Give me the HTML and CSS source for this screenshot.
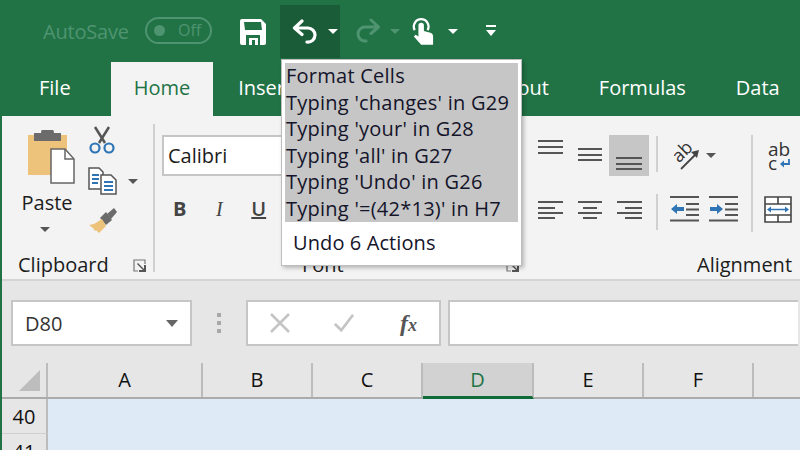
FILE: index.html
```html
<!DOCTYPE html>
<html lang="en">

<head>
    <meta charset="UTF-8">
    <meta name="viewport" content="width=device-width, initial-scale=1.0">
    <title>Excel Undo</title>
    <link rel="stylesheet" href="styles.css">
</head>

<body>

    <!-- Quick access bar -->
    <header class="titlebar">
        <span class="autosave">AutoSave</span>
        <span class="toggle"><span class="toggle-dot"></span><span class="toggle-label">Off</span></span>
        <svg class="qa-save" viewBox="0 0 26 26">
            <path fill="#fff" d="M2 0h19l5 5v19a2 2 0 0 1-2 2H2a2 2 0 0 1-2-2V2a2 2 0 0 1 2-2z" />
            <path fill="#217346" d="M4 3h17l1 8H5zM6 16h14v10H6z" />
            <path fill="#fff" d="M9 19h9v7H9z" />
            <path fill="#217346" d="M12 21h3v5h-3z" />
        </svg>
        <div class="qa-undo">
            <svg class="qa-arrow" viewBox="0 0 26 26">
                <path fill="none" stroke="#fff" stroke-width="3.2" stroke-linecap="round" stroke-linejoin="round"
                    d="M10 2 2.5 9 10 15.500M3 9h13a7 7 0 0 1 7 7 7 7 0 0 1-8 7" />
            </svg>
            <span class="caret caret-white"></span>
        </div>
        <svg class="qa-arrow qa-redo" viewBox="0 0 26 26">
            <path fill="none" stroke="#4f9470" stroke-width="3" stroke-linecap="round" stroke-linejoin="round"
                d="M16 2l7.500 7L16 15.500M23 9H10a7 7 0 0 0-7 7 7 7 0 0 0 8 7" />
        </svg>
        <span class="caret caret-dim"></span>
        <svg class="qa-touch" viewBox="0 0 24 30">
            <path fill="none" stroke="#fff" stroke-width="2.500" d="M3 14a8 8 0 1 1 14 0" />
            <path fill="#fff"
                d="M7 9a3 3 0 0 1 6 0v6l7 2c2 .6 3 2 3 4v9H10l-8-9 2-2 3 2z" />
        </svg>
        <span class="caret caret-white caret-touch"></span>
        <svg class="qa-more" viewBox="0 0 10 12">
            <path fill="#fff" d="M0 0h10v2H0zM0 5h10L5 11z" />
        </svg>
    </header>

    <!-- Ribbon tabs -->
    <nav class="tabs">
        <span class="tab tab-file">File</span>
        <span class="tab tab-active">Home</span>
        <span class="tab">Insert</span>
        <span class="tab tab-draw">Draw</span>
        <span class="tab">Page Layout</span>
        <span class="tab">Formulas</span>
        <span class="tab tab-last">Data</span>
    </nav>

    <!-- Ribbon -->
    <section class="ribbon">

        <div class="group group-clipboard">
            <div class="group-body">
                <div class="paste">
                    <svg class="paste-icon" viewBox="0 0 50 54">
                        <path fill="#edc27a" d="M3 5h39v40H3z" />
                        <path fill="#6b6b6b" d="M9 2h7a6 6 0 0 1 13 0h7v8H9z" transform="translate(0 1)" />
                        <path fill="#fff" stroke="#666" stroke-width="1.500" d="M26 19h14l9 10v24H26z" />
                        <path fill="none" stroke="#666" stroke-width="1.500" d="M40 19v10h9" />
                    </svg>
                    <span class="paste-label">Paste</span>
                    <span class="caret caret-dark"></span>
                </div>
                <div class="clip-small">
                    <svg class="icon-scissors" viewBox="0 0 28 28">
                        <path fill="none" stroke="#555" stroke-width="2.500" d="M7 1l10 16M21 1L11 17" />
                        <circle cx="7" cy="22" r="4.500" fill="none" stroke="#2f75b5" stroke-width="2.200" />
                        <circle cx="21" cy="22" r="4.500" fill="none" stroke="#2f75b5" stroke-width="2.200" />
                    </svg>
                    <div class="copy-row">
                        <svg class="icon-copy" viewBox="0 0 30 28">
                            <path fill="#fff" stroke="#555" stroke-width="1.500" d="M1 1h10l4 4v17H1z" />
                            <path fill="#fff" stroke="#555" stroke-width="1.500" d="M13 8h10l5 5v14H13z" />
                            <path stroke="#2f75b5" stroke-width="2" d="M4 8h7M4 12h7M4 16h6M16 15h9M16 19h9M16 23h9" />
                        </svg>
                        <span class="caret caret-dark"></span>
                    </div>
                    <svg class="icon-brush" viewBox="0 0 30 28">
                        <path fill="#6b6b6b" d="M19 7l7-6 3 4-6 7z" />
                        <path fill="#6b6b6b" d="M12 11l6-6 6 8-6 5z" />
                        <path fill="#edc27a" d="M14 12l4 7-7 7-3-3-1 1-2-3-4-3 5-1z" />
                    </svg>
                </div>
            </div>
            <div class="group-label">
                <span>Clipboard</span>
                <svg class="launcher" viewBox="0 0 13 13">
                    <path fill="none" stroke="#777" stroke-width="1.200" d="M12 5V1H1v11h4" />
                    <path fill="#555" d="M5 4l6 6V6h2v7H6v-2h4L4 5z" />
                </svg>
            </div>
        </div>

        <div class="group group-font">
            <div class="group-body group-body-font">
                <div class="font-box">Calibri</div>
                <div class="font-styles">
                    <span class="fs-bold">B</span>
                    <span class="fs-italic">I</span>
                    <span class="fs-under">U</span>
                </div>
            </div>
            <div class="group-label group-label-font">
                <span>Font</span>
                <svg class="launcher" viewBox="0 0 13 13">
                    <path fill="none" stroke="#777" stroke-width="1.200" d="M12 5V1H1v11h4" />
                    <path fill="#555" d="M5 4l6 6V6h2v7H6v-2h4L4 5z" />
                </svg>
            </div>
        </div>

        <div class="group group-align">
            <div class="group-body group-body-align">
                <div class="align-grid">
                    <div class="btn"><svg class="icon-lines" viewBox="0 0 40 41">
                            <path d="M9 6h25M9 12h25M9 18h25" /></svg></div>
                    <div class="btn"><svg class="icon-lines" viewBox="0 0 40 41">
                            <path d="M9 14h24M9 20h24M9 25h24" /></svg></div>
                    <div class="btn btn-on"><svg class="icon-lines" viewBox="0 0 40 41">
                            <path d="M7 23h26M7 29h26M7 34h26" /></svg></div>
                    <div class="btn"><svg class="icon-lines" viewBox="0 0 40 41">
                            <path d="M9 12h25M9 18h17M9 23h25M9 28h17" /></svg></div>
                    <div class="btn"><svg class="icon-lines" viewBox="0 0 40 41">
                            <path d="M9 12h24M14 18h14M9 23h24M14 28h14" /></svg></div>
                    <div class="btn"><svg class="icon-lines" viewBox="0 0 40 41">
                            <path d="M8 12h25M16 18h17M8 23h25M16 28h17" /></svg></div>
                </div>
                <div class="vsep-col"><span class="vsep"></span><span class="vsep"></span></div>
                <div class="orient-col">
                    <div class="orient-row">
                        <div class="icon-orient">
                            <span class="orient-text">ab</span>
                            <svg class="orient-arrow" viewBox="0 0 30 30">
                                <path fill="none" stroke="#444" stroke-width="1.800" d="M11 28 27 12" />
                                <path fill="#444" d="M29 9l-2 8-6-6z" />
                            </svg>
                        </div>
                        <span class="caret caret-dark"></span>
                    </div>
                    <div class="indent-row">
                        <svg class="icon-indent" viewBox="0 0 29 26">
                            <path class="indent-lines" d="M0 1h29M16 8h13M16 13.500h13M16 19h13M0 24.500h29" />
                            <path fill="#2f75b5" d="M1 13l6-5v3h7v4H7v3z" />
                        </svg>
                        <svg class="icon-indent" viewBox="0 0 29 26">
                            <path class="indent-lines" d="M0 1h29M16 8h13M16 13.500h13M16 19h13M0 24.500h29" />
                            <path fill="#2f75b5" d="M14 13l-6-5v3H1v4h7v3z" />
                        </svg>
                    </div>
                </div>
                <span class="vsep-tall"></span>
                <div class="wrap-col">
                    <div class="wrap-row">
                        <div class="icon-wrap">
                            <span class="wrap-text">ab</span>
                            <span class="wrap-text wrap-c">c</span>
                            <svg class="wrap-arrow" viewBox="0 0 10 9">
                                <path fill="none" stroke="#2f75b5" stroke-width="1.800" d="M9 0v5H4" />
                                <path fill="#2f75b5" d="M0 5l4-3.500v7z" />
                            </svg>
                        </div>
                    </div>
                    <svg class="icon-merge" viewBox="0 0 28 27">
                        <path fill="#fff" stroke="#444" stroke-width="1.600" d="M1 1h26v25H1z" />
                        <path fill="none" stroke="#444" stroke-width="1.600" d="M1 8h26M1 19h26M14 1v7M14 19v7" />
                        <path stroke="#2f75b5" stroke-width="1.500" d="M6 13.500h16" />
                        <path fill="#2f75b5" d="M3 13.500l4-3v6zM25 13.500l-4-3v6z" />
                    </svg>
                </div>
            </div>
            <div class="group-label group-label-align">Alignment</div>
        </div>
    </section>

    <!-- Formula bar -->
    <section class="formula-bar">
        <div class="name-box">
            <span>D80</span>
            <span class="caret caret-grey"></span>
        </div>
        <div class="grip"><i></i><i></i><i></i></div>
        <div class="fx-box">
            <svg class="fx-icon" viewBox="0 0 20 20">
                <path fill="none" stroke="#c4c4c4" stroke-width="2.500" d="M1 1l18 18M19 1 1 19" />
            </svg>
            <svg class="fx-icon" viewBox="0 0 22 20">
                <path fill="none" stroke="#c4c4c4" stroke-width="3" d="M1 11l7 7L21 1" />
            </svg>
            <span class="fx-label">f<small>x</small></span>
        </div>
        <div class="formula-input"></div>
    </section>

    <!-- Sheet -->
    <section class="sheet">
        <div class="col-heads">
            <div class="corner"><span class="corner-tri"></span></div>
            <div class="col-head col-a">A</div>
            <div class="col-head">B</div>
            <div class="col-head">C</div>
            <div class="col-head col-on">D</div>
            <div class="col-head">E</div>
            <div class="col-head">F</div>
            <div class="col-head col-g"></div>
        </div>
        <div class="sheet-row">
            <div class="row-head">40</div>
            <div class="cells"></div>
        </div>
        <div class="sheet-row">
            <div class="row-head">41</div>
            <div class="cells"></div>
        </div>
    </section>

    <!-- Undo dropdown -->
    <div class="undo-menu">
        <ul class="undo-list">
            <li>Format Cells</li>
            <li>Typing 'changes' in G29</li>
            <li>Typing 'your' in G28</li>
            <li>Typing 'all' in G27</li>
            <li>Typing 'Undo' in G26</li>
            <li>Typing '=(42*13)' in H7</li>
        </ul>
        <div class="undo-foot">Undo 6 Actions</div>
    </div>

</body>

</html>
```

FILE: styles.css
```css
/* Basic layout */
html,
body {
    margin: 0;
    padding: 0;
    width: 800px;
    height: 450px;
    overflow: hidden;
}

body {
    position: relative;
    font-family: "Open Sans", "Noto Sans", sans-serif;
    background-color: #e6e6e6;
    color: #1c1c1c;
    border-left: 2px solid #217346;
    box-sizing: border-box;
}

svg {
    display: block;
    flex-shrink: 0;
}

.caret {
    display: block;
    width: 0;
    height: 0;
    border-left: 5px solid transparent;
    border-right: 5px solid transparent;
    border-top: 5px solid #555;
    flex-shrink: 0;
}

.caret-white {
    border-top-color: #fff;
}

.caret-dim {
    border-top-color: #4f9470;
    margin-left: 9px;
}

.caret-dark {
    border-top-color: #555;
}

.caret-grey {
    border-left-width: 6px;
    border-right-width: 6px;
    border-top-width: 7px;
    border-top-color: #666;
}

/* Quick access bar */
.titlebar {
    height: 62px;
    margin-left: -2px;
    padding-left: 43px;
    background-color: #217346;
    display: flex;
    align-items: center;
}

.autosave {
    width: 102px;
    font-size: 20px;
    letter-spacing: -0.2px;
    color: #4f9470;
}

.toggle {
    width: 67px;
    height: 27px;
    box-sizing: border-box;
    border: 2px solid #4f9470;
    border-radius: 14px;
    display: flex;
    align-items: center;
    padding-left: 7px;
    margin-top: -2px;
}

.toggle-dot {
    width: 11px;
    height: 11px;
    border-radius: 50%;
    background-color: #4f9470;
}

.toggle-label {
    margin-left: 13px;
    font-size: 16px;
    color: #4f9470;
}

.qa-save {
    width: 26px;
    height: 26px;
    margin: 2px 14px 0 28px;
}

.qa-undo {
    width: 60px;
    height: 53px;
    background-color: #1a5c38;
    display: flex;
    align-items: center;
    padding-left: 12px;
    box-sizing: border-box;
    margin-bottom: -1px;
}

.qa-undo .caret {
    margin-left: 10px;
}

.qa-arrow {
    width: 26px;
    height: 26px;
}

.qa-redo {
    margin-left: 15px;
}

.qa-touch {
    width: 22px;
    height: 28px;
    margin-left: 12px;
}

.caret-touch {
    margin-left: 14px;
}

.qa-more {
    width: 10px;
    height: 12px;
    margin-left: 28px;
}

/* Ribbon tabs */
.tabs {
    height: 54px;
    margin-left: -2px;
    padding-left: 14px;
    background-color: #217346;
    display: flex;
    color: #fff;
    font-size: 20px;
    white-space: nowrap;
}

.tab {
    flex-shrink: 0;
    padding: 0 25px;
    line-height: 52px;
}

.tab-file {
    margin-right: 15px;
}

.tab-active {
    background-color: #f3f3f3;
    color: #217346;
    padding: 0 23px;
}

.tab-draw {
    padding: 0 22px;
}

.tab-last {
    padding-right: 0;
}

/* Ribbon */
.ribbon {
    height: 163px;
    background-color: #f3f3f3;
    border-bottom: 2px solid #d4d4d4;
    display: flex;
}

.group {
    display: flex;
    flex-direction: column;
    flex-shrink: 0;
    height: 163px;
    font-size: 20px;
}

.group-body {
    height: 137px;
    display: flex;
}

.group-label {
    display: flex;
    align-items: center;
    justify-content: space-between;
    line-height: 24px;
    padding-left: 16px;
}

.launcher {
    width: 13px;
    height: 13px;
    margin-right: 9px;
}

/* Clipboard group */
.group-clipboard {
    width: 153px;
    box-sizing: border-box;
    position: relative;
}

.group-clipboard::after {
    content: "";
    position: absolute;
    right: 0;
    top: 8px;
    width: 2px;
    height: 148px;
    background-color: #d0d0d0;
}

.group-clipboard .group-body {
    padding-left: 23px;
}

.paste {
    width: 50px;
    padding-top: 14px;
    display: flex;
    flex-direction: column;
    align-items: center;
}

.paste-icon {
    width: 50px;
    height: 54px;
}

.paste-label {
    line-height: 26px;
    margin-top: 6px;
    margin-right: 6px;
}

.paste .caret {
    margin-top: 11px;
    margin-right: 10px;
}

.clip-small {
    margin-left: 13px;
    padding-top: 10px;
    display: flex;
    flex-direction: column;
}

.icon-scissors {
    width: 28px;
    height: 28px;
}

.copy-row {
    display: flex;
    align-items: center;
    margin-top: 13px;
}

.copy-row .caret {
    margin-left: 10px;
}

.icon-copy {
    width: 30px;
    height: 28px;
}

.icon-brush {
    width: 30px;
    height: 28px;
    margin-top: 12px;
}

/* Font group */
.group-font {
    width: 374px;
    padding-left: 7px;
    box-sizing: border-box;
}

.group-body-font {
    flex-direction: column;
    padding-top: 19px;
    box-sizing: border-box;
}

.font-box {
    width: 200px;
    height: 41px;
    box-sizing: border-box;
    border: 2px solid #c6c6c6;
    background-color: #fff;
    padding-left: 4px;
    line-height: 38px;
}

.font-styles {
    display: flex;
    margin-top: 20px;
    font-size: 20px;
    line-height: 26px;
    color: #444;
}

.font-styles span {
    width: 39.500px;
    text-align: center;
}

.font-styles .fs-bold {
    margin-left: -2px;
    font-weight: bold;
}

.fs-italic {
    font-style: italic;
    font-family: "Liberation Serif", serif;
}

.fs-under {
    font-weight: 600;
    text-decoration: underline;
}

.group-label-font {
    padding-left: 140px;
}

.group-label-font .launcher {
    margin-right: 10px;
}

/* Alignment group */
.group-align {
    width: 269px;
}

.group-body-align {
    padding-top: 19px;
    box-sizing: border-box;
}

.align-grid {
    display: grid;
    grid-template-columns: repeat(3, 40px);
    grid-template-rows: 41px 41px;
    row-gap: 14px;
}

.btn-on {
    background-color: #c6c6c6;
}

.icon-lines {
    width: 40px;
    height: 41px;
}

.icon-lines path {
    fill: none;
    stroke: #555;
    stroke-width: 2;
}

.vsep-col {
    width: 2px;
    margin-left: 7px;
    display: flex;
    flex-direction: column;
    gap: 22px;
    padding-top: 1px;
}

.vsep {
    display: block;
    width: 2px;
    height: 36px;
    background-color: #d0d0d0;
}

.orient-col {
    width: 93px;
    padding-left: 12px;
    box-sizing: border-box;
}

.orient-row {
    display: flex;
    align-items: center;
    height: 41px;
}

.orient-row .caret {
    margin-left: 6px;
}

.icon-orient {
    width: 30px;
    height: 30px;
    position: relative;
}

.orient-text {
    position: absolute;
    left: 1px;
    top: -1px;
    font-size: 18px;
    line-height: 22px;
    color: #333;
    transform: rotate(-45deg);
}

.orient-arrow {
    position: absolute;
    left: 0;
    top: 0;
    width: 30px;
    height: 30px;
}

.indent-row {
    display: flex;
    gap: 10px;
    margin-top: 20px;
}

.icon-indent {
    width: 29px;
    height: 26px;
}

.indent-lines {
    fill: none;
    stroke: #555;
    stroke-width: 2;
}

.vsep-tall {
    display: block;
    width: 2px;
    height: 97px;
    background-color: #d0d0d0;
}

.wrap-col {
    padding-left: 11px;
}

.wrap-row {
    display: flex;
    align-items: center;
    height: 41px;
}

.icon-wrap {
    width: 24px;
    height: 28px;
    margin-left: 4px;
    position: relative;
    display: flex;
    flex-direction: column;
}

.wrap-text {
    font-size: 19px;
    line-height: 14px;
    color: #333;
}

.wrap-arrow {
    position: absolute;
    left: 12px;
    top: 17px;
    width: 10px;
    height: 9px;
}

.icon-merge {
    width: 28px;
    height: 27px;
    margin-top: 20px;
}

.group-label-align {
    padding-left: 168px;
}

/* Formula bar */
.formula-bar {
    height: 46px;
    margin-top: 19px;
    display: flex;
    padding-left: 9px;
}

.name-box,
.fx-box,
.formula-input {
    box-sizing: border-box;
    border: 2px solid #c6c6c6;
    background-color: #fff;
    flex-shrink: 0;
}

.name-box {
    width: 181px;
    display: flex;
    align-items: center;
    justify-content: space-between;
    padding: 0 12px;
    font-size: 20px;
    color: #333;
}

.grip {
    width: 54px;
    flex-shrink: 0;
    display: flex;
    flex-direction: column;
    align-items: center;
    justify-content: center;
    gap: 4px;
}

.grip i {
    width: 4px;
    height: 4px;
    background-color: #a8a8a8;
}

.fx-box {
    width: 195px;
    display: flex;
    align-items: center;
    padding-left: 22px;
}

.fx-icon {
    width: 20px;
    height: 20px;
    margin-right: 44px;
}

.fx-label {
    font-family: "Liberation Serif", serif;
    font-style: italic;
    font-weight: bold;
    font-size: 24px;
    color: #555;
    margin-left: 2px;
}

.fx-label small {
    font-size: 18px;
}

.formula-input {
    width: 350px;
    margin-left: 7px;
    border-right: 0;
}

/* Sheet */
.sheet {
    margin-top: 17px;
    font-size: 20px;
}

.col-heads {
    height: 36px;
    display: flex;
    border-bottom: 2px solid #ababab;
    box-sizing: border-box;
}

.corner {
    width: 46px;
    flex-shrink: 0;
    border-right: 2px solid #bcbcbc;
    box-sizing: border-box;
    position: relative;
}

.corner-tri {
    position: absolute;
    right: 6px;
    bottom: 6px;
    width: 0;
    height: 0;
    border-left: 21px solid transparent;
    border-bottom: 21px solid #bdbdbd;
}

.col-head {
    width: 110px;
    flex-shrink: 0;
    box-sizing: border-box;
    border-right: 2px solid #bcbcbc;
    text-align: center;
    line-height: 33px;
    color: #111;
}

.col-a {
    width: 155px;
}

.col-on {
    width: 111px;
    height: 36px;
    background-color: #d2d2d2;
    border-bottom: 3px solid #0f6b38;
    color: #217346;
}

.col-g {
    width: 44px;
    border-right: 0;
}

.sheet-row {
    display: flex;
    height: 35px;
}

.row-head {
    width: 46px;
    flex-shrink: 0;
    box-sizing: border-box;
    border-right: 2px solid #bcbcbc;
    border-bottom: 1px solid #cfcfcf;
    text-align: center;
    line-height: 36px;
    color: #111;
}

.cells {
    flex: 1;
    background-color: #deebf7;
}

/* Undo dropdown */
.undo-menu {
    position: absolute;
    left: 279px;
    top: 59px;
    width: 241px;
    height: 207px;
    box-sizing: border-box;
    padding: 3px 3px 0;
    background-color: #fff;
    border: 1px solid #bdbdbd;
    box-shadow: 2px 2px 4px rgba(0, 0, 0, 0.25);
    font-size: 20px;
    color: #14142a;
}

.undo-list {
    list-style: none;
    margin: 0;
    padding: 0 0 0 1px;
    background-color: #c6c6c6;
    white-space: nowrap;
    letter-spacing: 0.25px;
}

.undo-list li {
    height: 26.500px;
    line-height: 26px;
}

.undo-foot {
    padding-left: 8px;
    line-height: 42px;
    letter-spacing: 0.1px;
}
```
